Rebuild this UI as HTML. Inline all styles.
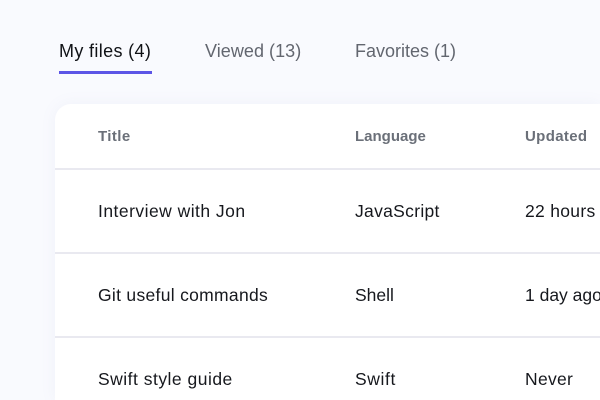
<!DOCTYPE html>
<html>
<head>
<meta charset="utf-8">
<style>
html,body{margin:0;padding:0;width:600px;height:400px;overflow:hidden;background:#f9fafe;font-family:"Liberation Sans",sans-serif;}
#w{position:relative;width:600px;height:400px;overflow:hidden;}
.t{position:absolute;white-space:nowrap;line-height:20px;}
.tab{font-size:18px;color:#62666f;top:41px;}
.h{font-size:15px;font-weight:bold;color:#6b7079;top:127px;}
.c{font-size:17.5px;color:#16181d;letter-spacing:.3px;}
.card{position:absolute;left:55px;top:104px;width:545px;height:296px;background:#fff;border-radius:16px 0 0 0;box-shadow:0 0 16px rgba(120,130,190,.07);}
.l{position:absolute;left:55px;width:545px;height:2px;background:#e9e9f0;}
.u{position:absolute;left:59px;top:71px;width:93px;height:3px;background:#5c55e6;}
</style>
</head>
<body>
<div id="w">
<div class="t tab" style="left:59px;color:#101216;letter-spacing:.35px;">My files (4)</div>
<div class="t tab" style="left:205px;letter-spacing:.05px;">Viewed (13)</div>
<div class="t tab" style="left:355px;">Favorites (1)</div>
<div class="u"></div>
<div class="card"></div>
<div class="t h" style="left:98px;letter-spacing:.4px;">Title</div>
<div class="t h" style="left:355px;">Language</div>
<div class="t h" style="left:525px;letter-spacing:.35px;">Updated</div>
<div class="l" style="top:168px;"></div>
<div class="l" style="top:252px;"></div>
<div class="l" style="top:336px;"></div>
<div class="t c" style="left:98px;top:201px;letter-spacing:.47px;">Interview with Jon</div>
<div class="t c" style="left:355px;top:201px;">JavaScript</div>
<div class="t c" style="left:525px;top:201px;width:75px;overflow:hidden;">22 hours ago</div>
<div class="t c" style="left:98px;top:285px;">Git useful commands</div>
<div class="t c" style="left:355px;top:285px;letter-spacing:0;">Shell</div>
<div class="t c" style="left:525px;top:285px;width:75px;overflow:hidden;letter-spacing:0;">1 day ago</div>
<div class="t c" style="left:98px;top:369px;letter-spacing:.49px;">Swift style guide</div>
<div class="t c" style="left:355px;top:369px;letter-spacing:.6px;">Swift</div>
<div class="t c" style="left:525px;top:369px;">Never</div>
</div>
</body>
</html>
